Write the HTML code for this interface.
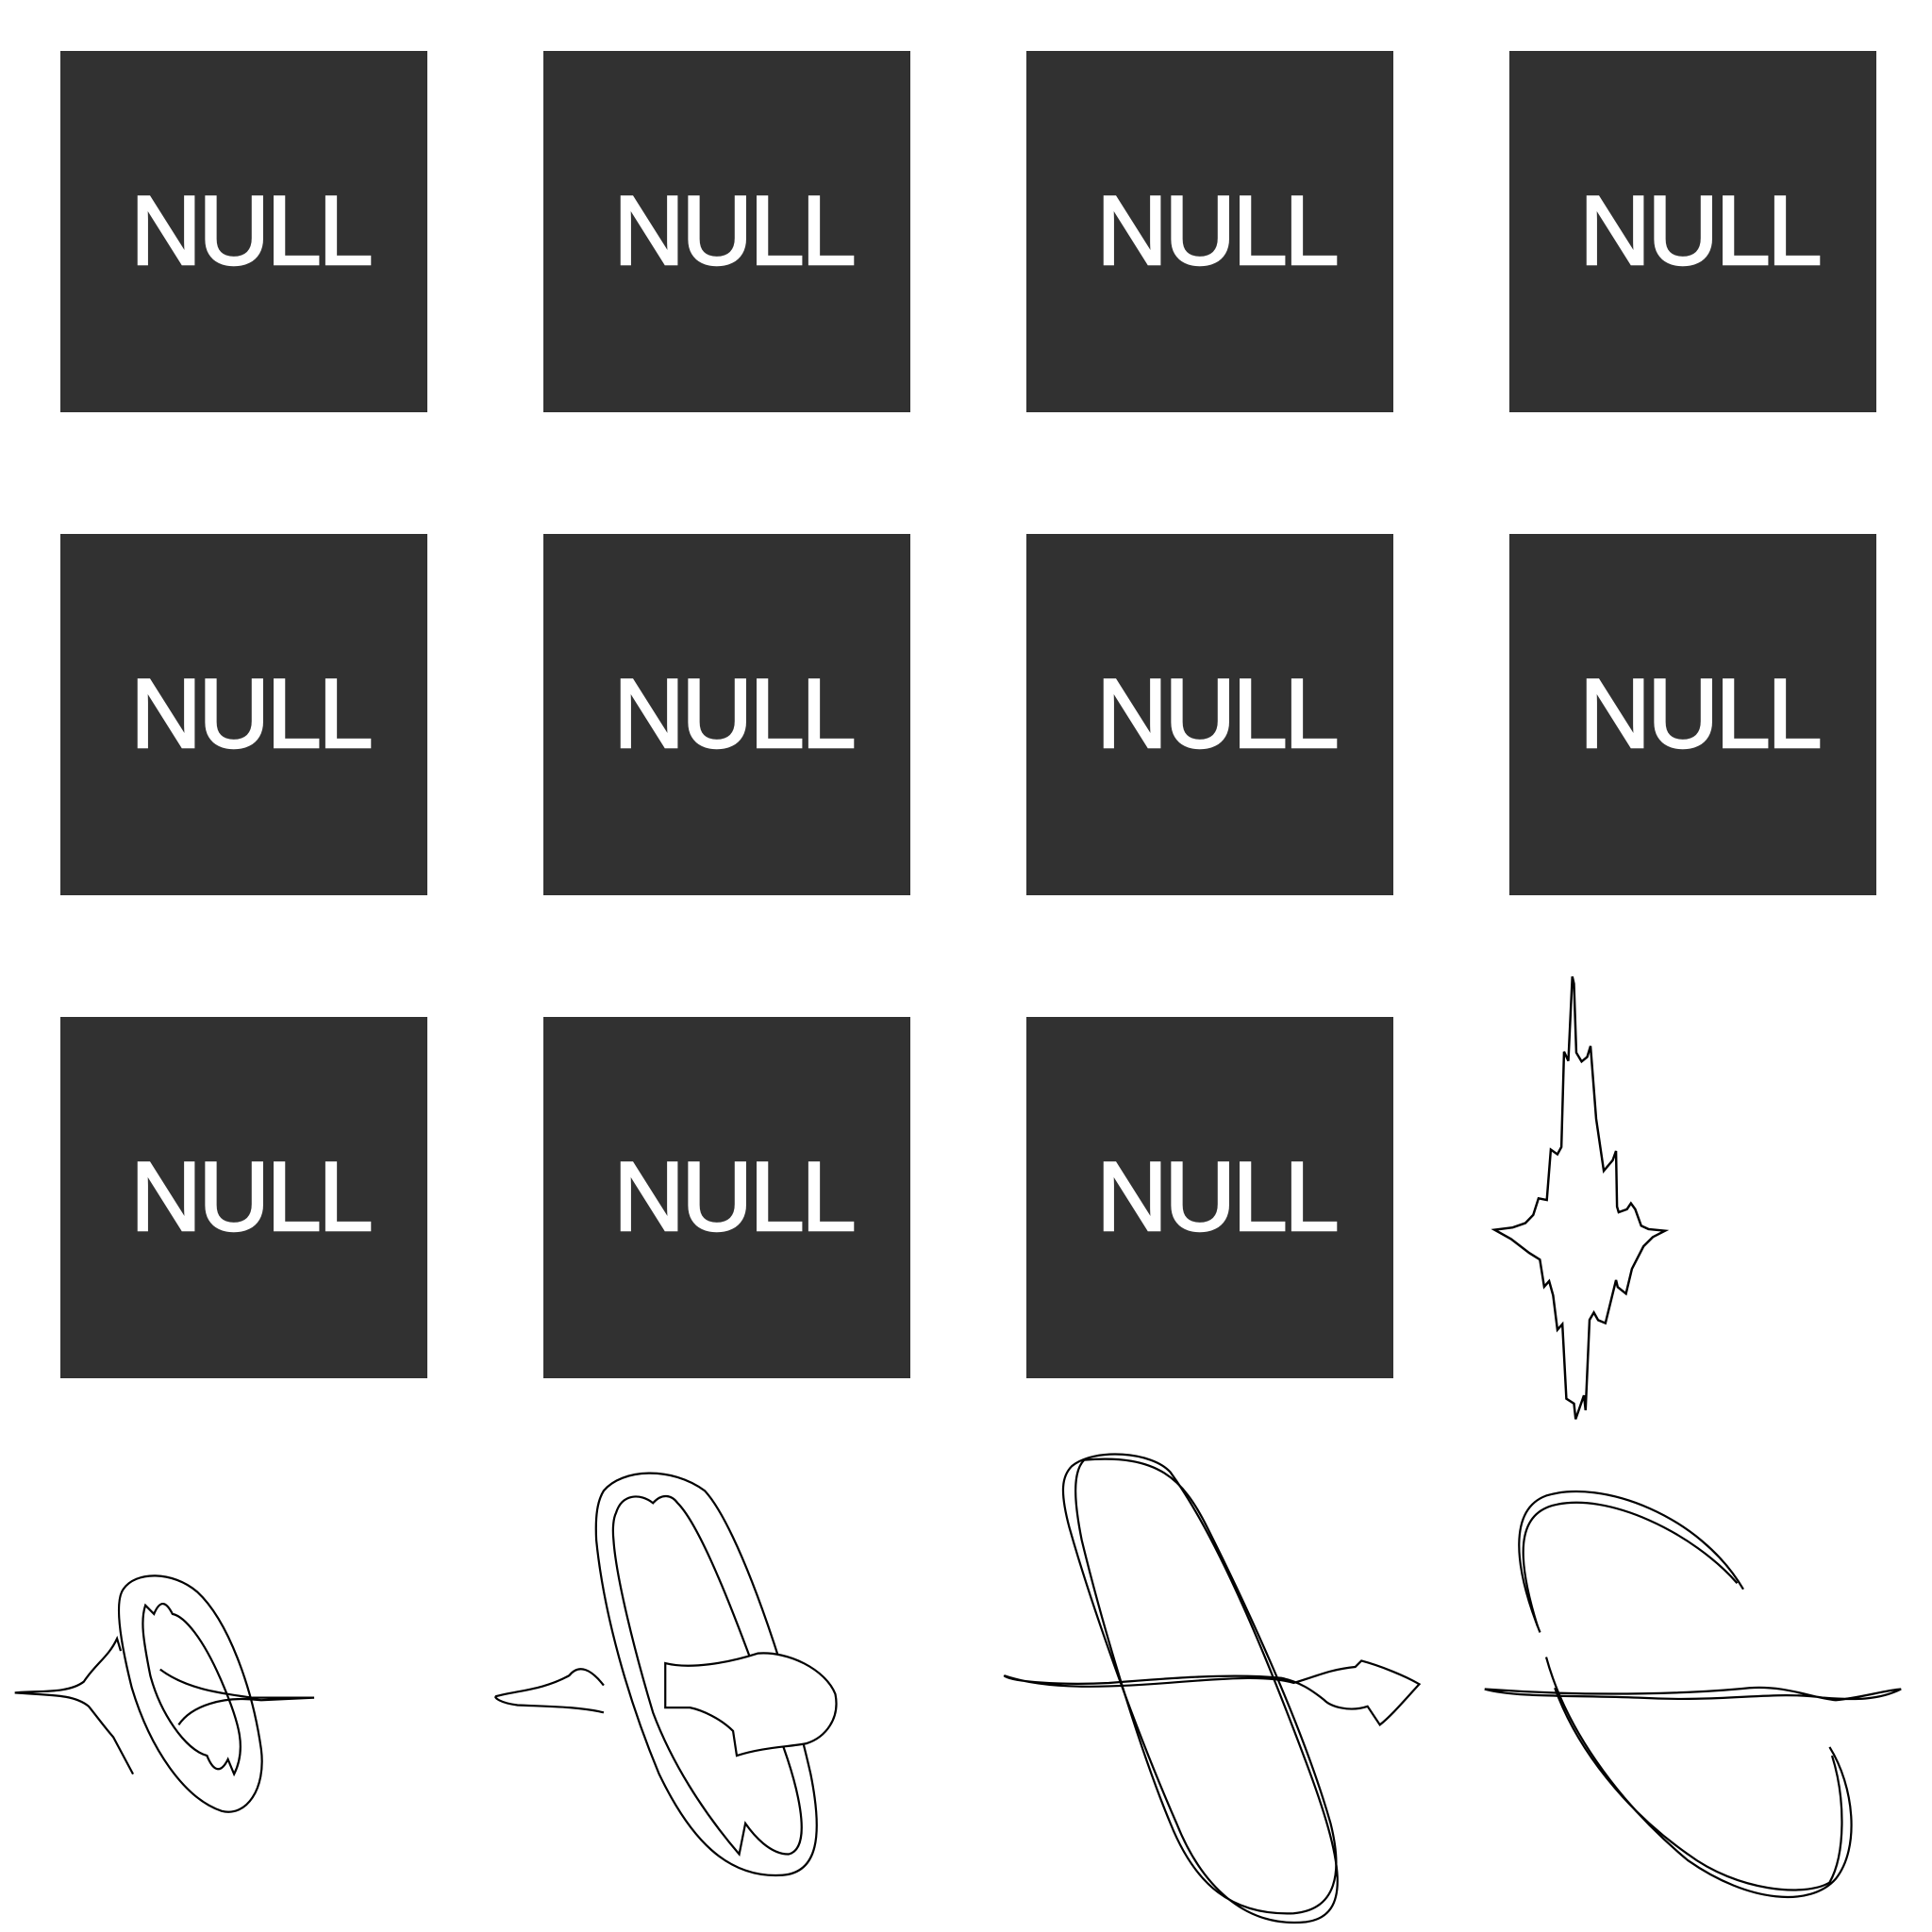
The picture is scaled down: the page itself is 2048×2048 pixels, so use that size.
<!DOCTYPE html>
<html><head><meta charset="utf-8"><style>
html,body{margin:0;padding:0;background:#fff;width:2048px;height:2048px;overflow:hidden}
.b{position:absolute;width:389px;height:383px;background:#313131;color:#fff;font-family:"Liberation Sans",sans-serif;font-size:104px;line-height:383px;text-align:center;letter-spacing:-3px;text-indent:14px;-webkit-text-stroke:2.5px #fff}
svg{position:absolute;left:0;top:0}
</style></head><body>
<div class="b" style="left:64px;top:54px">NULL</div>
<div class="b" style="left:576px;top:54px">NULL</div>
<div class="b" style="left:1088px;top:54px">NULL</div>
<div class="b" style="left:1600px;top:54px">NULL</div>
<div class="b" style="left:64px;top:566px">NULL</div>
<div class="b" style="left:576px;top:566px">NULL</div>
<div class="b" style="left:1088px;top:566px">NULL</div>
<div class="b" style="left:1600px;top:566px">NULL</div>
<div class="b" style="left:64px;top:1078px">NULL</div>
<div class="b" style="left:576px;top:1078px">NULL</div>
<div class="b" style="left:1088px;top:1078px">NULL</div>
<svg width="2048" height="2048" viewBox="0 0 2048 2048" fill="none" stroke="#000" stroke-width="2">
<g transform="translate(1500,1000) scale(0.351)" stroke-width="7">
<polyline points="475,100 480,122 487,330 503,357 520,343 530,310 547,530 570,687 597,655 607,627 610,795 615,812 640,803 652,785 665,803 683,853 705,863 755,868 718,887 690,915 655,983 637,1058 612,1038 607,1017 575,1147 553,1138 540,1115 527,1137 515,1410 510,1365 485,1437 480,1390 457,1375 445,1150 430,1167 417,1063 405,1020 390,1037 377,955 345,935 290,893 240,865 295,858 333,845 357,820 373,770 398,775 410,623 430,637 442,615 450,327 463,355 475,100"/>
</g>
<g transform="scale(1.306)" stroke-width="1.7">
<!-- sketch 1 -->
<path d="M100,1290 C110,1275 140,1275 160,1292 C185,1315 205,1370 212,1420 C216,1452 200,1475 180,1470 C150,1460 122,1420 107,1370 C97,1330 93,1300 100,1290 Z"/>
<path d="M118,1303 L125,1310 C130,1298 135,1300 140,1310 C150,1312 165,1330 180,1365 C195,1400 200,1420 190,1440 L185,1428 C178,1442 172,1435 168,1425 C150,1420 130,1390 122,1360 C116,1330 114,1315 118,1303 Z"/>
<path d="M12,1374 C30,1372 55,1375 68,1365 C78,1350 88,1345 95,1330 L98,1340 M12,1374 C40,1376 60,1375 72,1385 C80,1395 85,1402 92,1410 L108,1440 M130,1355 C150,1370 175,1374 205,1378 L255,1378 L212,1380 C180,1376 155,1385 145,1400"/>
<!-- sketch 2 -->
<path d="M490,1210 C505,1192 545,1190 572,1210 C600,1240 640,1360 658,1440 C668,1490 664,1520 635,1522 C590,1525 560,1492 535,1440 C510,1380 490,1310 484,1250 C483,1230 485,1218 490,1210 Z"/>
<path d="M500,1228 C505,1212 520,1212 530,1220 C537,1212 545,1213 550,1220 C570,1240 600,1320 625,1390 C650,1450 660,1500 640,1505 C625,1505 612,1490 605,1480 L600,1505 C570,1470 545,1430 530,1390 C515,1340 500,1280 498,1250 C497,1240 498,1232 500,1228 Z"/>
<path fill="#fff" d="M540,1350 C560,1355 590,1350 615,1342 C640,1340 670,1355 678,1375 C682,1395 670,1410 655,1415 C640,1418 620,1418 598,1425 L595,1405 C585,1395 570,1388 560,1386 L540,1386 Z"/>
<path d="M402,1377 C420,1372 440,1372 462,1360 C470,1350 480,1355 490,1368 M490,1390 C470,1385 440,1385 420,1384 C405,1382 402,1378 402,1377"/>
<!-- sketch 3 -->
<path d="M870,1190 C888,1175 935,1178 950,1195 C990,1250 1030,1350 1060,1430 C1090,1510 1098,1555 1060,1560 C1010,1565 975,1530 955,1480 C920,1400 885,1300 868,1240 C860,1210 862,1198 870,1190 Z"/>
<path d="M880,1185 C870,1195 872,1220 878,1250 C895,1320 925,1420 950,1480 C970,1530 1000,1555 1050,1553 C1085,1550 1090,1520 1080,1480 C1060,1410 1020,1320 980,1240 C960,1200 940,1180 880,1185"/>
<path d="M815,1360 C850,1372 900,1370 960,1365 C1000,1362 1030,1360 1050,1366 C1070,1360 1080,1355 1100,1353 L1105,1348 C1120,1352 1140,1360 1152,1367 C1140,1380 1130,1392 1120,1400 L1110,1385 C1095,1390 1080,1385 1075,1380 C1065,1372 1055,1365 1040,1362 C1000,1358 950,1362 900,1366 C860,1368 820,1365 815,1360 Z"/>
<!-- sketch 4 -->
<path d="M1250,1325 C1228,1270 1225,1225 1255,1214 C1300,1200 1380,1230 1415,1290"/>
<path d="M1248,1320 C1230,1262 1232,1230 1260,1222 C1305,1210 1375,1245 1410,1285"/>
<path d="M1255,1345 C1270,1400 1310,1460 1370,1510 C1420,1545 1470,1548 1490,1525 C1510,1500 1505,1450 1485,1418"/>
<path d="M1262,1370 C1280,1420 1320,1470 1370,1505 C1410,1535 1465,1540 1485,1528 C1498,1505 1498,1460 1487,1425"/>
<path d="M1205,1371 C1300,1378 1380,1374 1420,1370 C1450,1368 1470,1378 1490,1380 C1510,1378 1530,1372 1543,1371 C1525,1380 1505,1380 1480,1378 C1440,1372 1400,1382 1330,1378 C1280,1376 1230,1378 1205,1371"/>
</g>
</svg>
</body></html>
